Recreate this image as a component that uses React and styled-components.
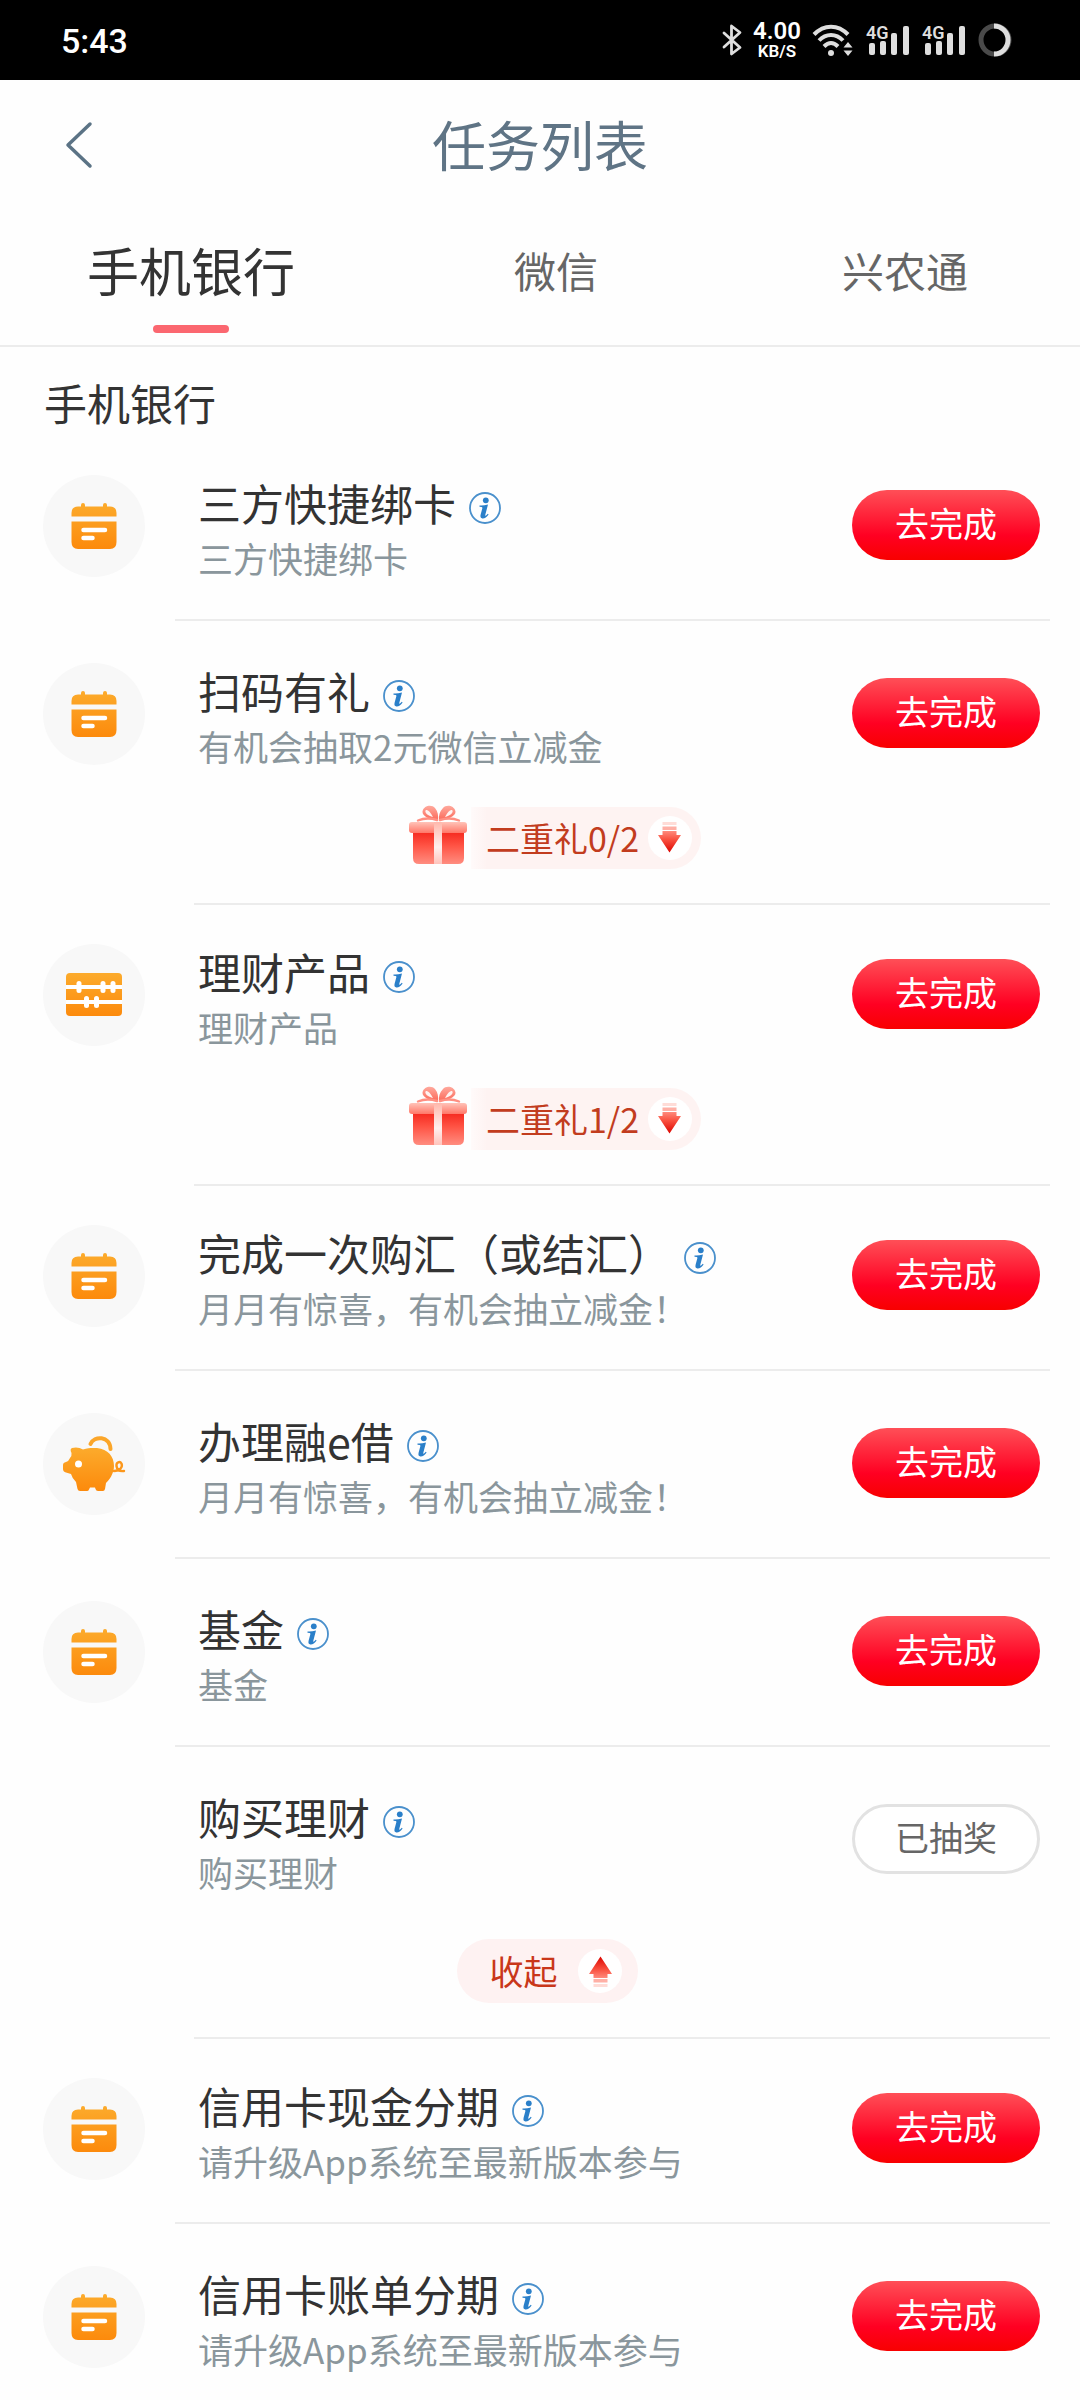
import React, { useState } from "react";
import styled, { createGlobalStyle } from "styled-components";

const tabs = ["手机银行", "微信", "兴农通"];

const tasks = [
  { title: "三方快捷绑卡", desc: "三方快捷绑卡", icon: "calendar" },
  { title: "扫码有礼", desc: "有机会抽取2元微信立减金", icon: "calendar", gift: "二重礼0/2" },
  { title: "理财产品", desc: "理财产品", icon: "abacus", gift: "二重礼1/2" },
  { title: "完成一次购汇（或结汇）", desc: "月月有惊喜，有机会抽立减金！", icon: "calendar" },
  { title: "办理融e借", desc: "月月有惊喜，有机会抽立减金！", icon: "pig" },
  { title: "基金", desc: "基金", icon: "calendar" },
  { title: "购买理财", desc: "购买理财", done: true, collapse: true },
  { title: "信用卡现金分期", desc: "请升级App系统至最新版本参与", icon: "calendar" },
  { title: "信用卡账单分期", desc: "请升级App系统至最新版本参与", icon: "calendar" },
];

function Bluetooth() {
  return (
    <svg width="20" height="32" viewBox="0 0 20 32" fill="none" stroke="#dedede" strokeWidth="2.8" strokeLinejoin="round" strokeLinecap="round">
      <path d="M2 9L18 23.500L9.500 30V2L18 8.500L2 23" />
    </svg>
  );
}

function Wifi() {
  return (
    <svg width="42" height="34" viewBox="0 0 42 34" fill="none" stroke="#dedede" strokeWidth="4">
      <path d="M2 11.500C12 1 26 1 36 11.500" />
      <path d="M7 17.500C14 10 24 10 31 17.500" />
      <path d="M12 23.500C16.500 19 21.500 19 26 23.500" />
      <circle cx="19" cy="30" r="3" fill="#dedede" stroke="none" />
      <path d="M31.500 24.500L36 19L40.500 24.500ZM31.500 27.500L36 33L40.500 27.500Z" fill="#dedede" stroke="none" />
    </svg>
  );
}

function Signal() {
  return (
    <svg width="44" height="32" viewBox="0 0 44 32" fill="#dedede">
      <text x="0" y="15" fontFamily="Roboto, sans-serif" fontSize="18" fontWeight="600">4G</text>
      <rect x="3" y="19" width="6" height="12" rx="2" />
      <rect x="14" y="17" width="6" height="14" rx="2" />
      <rect x="25" y="9" width="6" height="22" rx="2" />
      <rect x="37" y="2" width="6" height="29" rx="2" />
    </svg>
  );
}

function Battery() {
  return (
    <svg width="34" height="34" viewBox="0 0 34 34" fill="none" strokeWidth="5">
      <circle cx="17" cy="17" r="14" stroke="#4a4a4a" />
      <path d="M16 3A14 14 0 1 1 16 31" stroke="#dedede" />
    </svg>
  );
}

function Orange({ id }) {
  return (
    <linearGradient id={id} x1="0" y1="0" x2="0" y2="1">
      <stop offset="0" stopColor="#fcab2c" />
      <stop offset="1" stopColor="#fc8a0c" />
    </linearGradient>
  );
}

function Calendar() {
  return (
    <svg width="46" height="46" viewBox="0 0 46 46">
      <defs><Orange id="cal" /></defs>
      <path fill="url(#cal)" d="M0.500 13.500V10Q0.500 3.500 7 3.500H10V2Q10 0 12 0T14 2V3.500H32V2Q32 0 34 0T36 2V3.500H39Q45.500 3.500 45.500 10V13.500ZM0.500 18.500H45.500V39Q45.500 46 39 46H7Q0.500 46 0.500 39Z" />
      <path d="M12.500 27H34M12.500 35H21.500" stroke="#fff" strokeWidth="4.500" strokeLinecap="round" />
    </svg>
  );
}

function Abacus() {
  return (
    <svg width="56" height="44" viewBox="0 0 56 44">
      <defs><Orange id="aba" /></defs>
      <rect width="56" height="43" rx="4" fill="url(#aba)" />
      <path d="M0 14H56M0 29H56" stroke="#fff" strokeWidth="4" />
      <g fill="#fff">
        <rect x="10.500" y="8" width="5" height="12" rx="2.500" />
        <rect x="34.500" y="8" width="5" height="12" rx="2.500" />
        <rect x="44.500" y="8" width="5" height="12" rx="2.500" />
        <rect x="18" y="23" width="5" height="12" rx="2.500" />
        <rect x="28" y="23" width="5" height="12" rx="2.500" />
      </g>
    </svg>
  );
}

function Pig() {
  return (
    <svg width="62" height="56" viewBox="0 0 62 56">
      <defs><Orange id="pig" /></defs>
      <path fill="url(#pig)" d="M9 12Q15 10.500 20 13.500C26 11.500 30 12 34 12C45 13 51 20.500 51 30C51 38 46 44 43 47L42 53Q41.500 55 40 55H35Q33 55 32.500 53L32 51.500H27L26 53.500Q25.500 55 24 55H17Q15 55 14.500 53L13 46Q9 42 8 38L3 36.500Q0 35.500 0 33V29Q0 26.500 3 26Q5.500 25.500 7 22Q9 19.500 8.500 17Q6.500 13 9 12Z" />
      <path d="M27.500 8C31 -0.500 47 -0.500 47.500 13" fill="none" stroke="#fba62a" strokeWidth="4" strokeLinecap="round" />
      <path d="M51 35C57 35 60 31 58.500 27.500C57 25 53 26 53.500 30C54 34 57 35.500 61 35" fill="none" stroke="#fc971b" strokeWidth="2.400" strokeLinecap="round" />
      <circle cx="15.500" cy="28" r="3.500" fill="#fff" />
    </svg>
  );
}

const icons = { calendar: Calendar, abacus: Abacus, pig: Pig };

function Gift() {
  return (
    <svg width="58" height="60" viewBox="0 3 58 60">
      <defs>
        <linearGradient id="box" x1="0" y1="0" x2="0" y2="1">
          <stop offset="0" stopColor="#f5261c" />
          <stop offset="0.450" stopColor="#ff5445" />
          <stop offset="1" stopColor="#ff8d80" />
        </linearGradient>
        <linearGradient id="lid" x1="0" y1="0" x2="0" y2="1">
          <stop offset="0" stopColor="#ffc3b8" />
          <stop offset="1" stopColor="#ff7768" />
        </linearGradient>
        <linearGradient id="ribbon" x1="0" y1="0" x2="0" y2="1">
          <stop offset="0" stopColor="#ffb8ac" />
          <stop offset="0.600" stopColor="#fff0ee" />
          <stop offset="1" stopColor="#ffc4bc" />
        </linearGradient>
        <linearGradient id="bow" x1="0" y1="0" x2="0" y2="1">
          <stop offset="0" stopColor="#ffa99d" />
          <stop offset="1" stopColor="#fb6a5a" />
        </linearGradient>
      </defs>
      <path d="M4 26H55V53Q55 59 49 59H10Q4 59 4 53Z" fill="url(#box)" />
      <rect y="17" width="58" height="11" rx="3" fill="url(#lid)" />
      <rect x="25" y="17" width="8" height="42" fill="url(#ribbon)" />
      <path d="M29 15C21 15 13 11 13.500 6.500C15 0 23 -0.500 26 3C29 6.500 29.500 11 29 15ZM30 15C38 15 47 11 46.500 6.500C45 0 37 -0.500 34 3C30.500 6.500 29.500 11 30 15Z" fill="url(#bow)" />
      <path d="M24 12C19 10.500 15.500 8 16.500 5.500C18 4 21 6 24 12ZM36 12C41 10.500 44.500 8 43.500 5.500C42 4 39 6 36 12Z" fill="#fff3f1" />
      <path d="M9 15.500C16 12.500 22 13 28 15M50 15.500C43 12.500 37 13 31 15" fill="none" stroke="#ff8f82" strokeWidth="2.400" strokeLinecap="round" />
    </svg>
  );
}

function Arrow({ up }) {
  return (
    <ArrowDot>
      <svg width="44" height="44" viewBox="0 0 44 44">
        <defs>
          <linearGradient id="arrow" x1="0" y1="0" x2="0" y2="1">
            <stop offset="0" stopColor="#ff8a7c" />
            <stop offset="0.400" stopColor="#f9503f" />
            <stop offset="1" stopColor="#dc0500" />
          </linearGradient>
        </defs>
        <g transform={up ? "rotate(180 22 22)" : undefined}>
          <path d="M14.500 15H28.500V19H33L21.500 36.500L10 19H14.500Z" fill="url(#arrow)" />
          <rect x="14.500" y="10.500" width="14" height="3.500" fill="#ffb0a6" />
          <rect x="14.500" y="6" width="14" height="3" fill="#ffdcd7" />
        </g>
      </svg>
    </ArrowDot>
  );
}

function Info() {
  return (
    <svg width="32" height="32" viewBox="0 0 32 32">
      <circle cx="16" cy="16" r="15" fill="none" stroke="#4a90cc" strokeWidth="1.800" />
      <circle cx="16.800" cy="8.300" r="2.900" fill="#2a7fc9" />
      <path d="M10.500 13.400Q14 13.800 19 12.500L16.300 22.800Q16.100 24.300 17 23.600Q17.800 23 18.800 21.800L19.600 22.400Q16.600 26.800 13.400 26.500Q10.800 26.200 11.600 22.800L13.400 16Q13.700 14.700 10.500 14.700Z" fill="#2a7fc9" />
    </svg>
  );
}

function Task({ task }) {
  const Icon = icons[task.icon];
  const expanded = Boolean(task.gift || task.collapse);
  return (
    <Row $expanded={expanded}>
      <Main>
        <IconCircle $empty={!Icon}>{Icon && <Icon />}</IconCircle>
        <Texts>
          <Title>
            {task.title}
            <InfoButton type="button" aria-label="说明"><Info /></InfoButton>
          </Title>
          <Desc>{task.desc}</Desc>
        </Texts>
        <Action type="button" $done={task.done}>{task.done ? "已抽奖" : "去完成"}</Action>
      </Main>
      {task.gift && (
        <Extra>
          <GiftButton type="button">
            <Gift />
            <GiftPill>{task.gift}<Arrow /></GiftPill>
          </GiftButton>
        </Extra>
      )}
      {task.collapse && (
        <Extra $collapse>
          <CollapseButton type="button">收起<Arrow up /></CollapseButton>
        </Extra>
      )}
      <Divider $expanded={expanded} />
    </Row>
  );
}

export default function App() {
  const [active, setActive] = useState(0);

  return (
    <Page>
      <GlobalStyle />
      <StatusBar>
        <Time>5:43</Time>
        <StatusIcons>
          <Bluetooth />
          <Speed><b>4.00</b><span>KB/S</span></Speed>
          <Wifi />
          <Signal />
          <Signal />
          <Battery />
        </StatusIcons>
      </StatusBar>
      <Header>
        <Back type="button" aria-label="返回">
          <svg width="28" height="46" viewBox="0 0 28 46" fill="none" stroke="#5b7385" strokeWidth="3.500" strokeLinecap="round" strokeLinejoin="round">
            <path d="M25 2L3 23L25 44" />
          </svg>
        </Back>
        <h1>任务列表</h1>
      </Header>
      <Tabs>
        {tabs.map((tab, i) => (
          <Tab key={tab} type="button" $active={i === active} onClick={() => setActive(i)}>{tab}</Tab>
        ))}
      </Tabs>
      <SectionTitle>手机银行</SectionTitle>
      <List>
        {tasks.map((task) => <Task key={task.title} task={task} />)}
      </List>
    </Page>
  );
}

const GlobalStyle = createGlobalStyle`
  * {
    box-sizing: border-box;
  }
  body {
    margin: 0;
    background: #fefefe;
  }
  body, button {
    font-family: "Noto Sans CJK SC", sans-serif;
  }
  button {
    border: 0;
    padding: 0;
    background: none;
    color: inherit;
    cursor: pointer;
  }
  svg {
    display: block;
    flex-shrink: 0;
    overflow: visible;
  }
`;

const Page = styled.div`
  min-height: 100vh;
  background: #fefefe;
  color: #333;
`;

const StatusBar = styled.div`
  display: flex;
  align-items: center;
  justify-content: space-between;
  height: 80px;
  padding: 0 68px 0 61px;
  background: #000;
  color: #fff;
`;

const Time = styled.span`
  padding-top: 2px;
  font: 500 34px/40px Roboto, sans-serif;
`;

const StatusIcons = styled.div`
  display: flex;
  align-items: center;
  gap: 12px;
`;

const Speed = styled.div`
  display: flex;
  flex-direction: column;
  align-items: center;
  width: 46px;
  font-family: Roboto, sans-serif;
  b {
    font-size: 24px;
    font-weight: 600;
    line-height: 22px;
  }
  span {
    font-size: 17px;
    font-weight: 600;
    line-height: 18px;
  }
`;

const Header = styled.header`
  display: grid;
  grid-template-columns: 93px 1fr 93px;
  align-items: center;
  height: 130px;
  h1 {
    margin: 0;
    padding-bottom: 2px;
    font-size: 54px;
    font-weight: 400;
    line-height: 60px;
    text-align: center;
    color: #5f7485;
  }
`;

const Back = styled.button`
  justify-self: end;
`;

const Tabs = styled.nav`
  display: grid;
  grid-template-columns: 382fr 348fr 350fr;
  padding: 30px 0 12px;
  border-bottom: 2px solid #ececec;
`;

const Tab = styled.button`
  display: flex;
  flex-direction: column;
  align-items: center;
  gap: 25px;
  font-size: ${({ $active }) => ($active ? 52 : 42)}px;
  line-height: 60px;
  color: ${({ $active }) => ($active ? "#333" : "#666")};
  &::after {
    content: "";
    width: 76px;
    height: 8px;
    border-radius: 4px;
    background: ${({ $active }) => ($active ? "#fb6770" : "transparent")};
  }
`;

const SectionTitle = styled.h2`
  margin: 0;
  padding: 26px 44px 2px;
  font-size: 43px;
  font-weight: 400;
  line-height: 58px;
`;

const List = styled.ul`
  margin: 0;
  padding: 0;
  list-style: none;
`;

/* expanded rows sit a little tighter against the next one */
const Row = styled.li`
  margin-bottom: ${({ $expanded }) => ($expanded ? "-3px" : 0)};
`;

const Main = styled.div`
  display: flex;
  align-items: flex-start;
  padding: 42px 40px 32px 43px;
  ${Row}:last-child & {
    padding-bottom: 16px;
  }
`;

const IconCircle = styled.div`
  display: flex;
  align-items: center;
  justify-content: center;
  flex-shrink: 0;
  width: 102px;
  height: 102px;
  border-radius: 50%;
  background: ${({ $empty }) => ($empty ? "transparent" : "#f8f8f8")};
`;

const Texts = styled.div`
  flex: 1;
  min-width: 0;
  margin-left: 53px;
`;

const Title = styled.div`
  display: flex;
  align-items: center;
  height: 54px;
  font-size: 43px;
  line-height: 54px;
`;

const InfoButton = styled.button`
  margin: 12px 0 0 13px;
`;

const Desc = styled.div`
  font-size: 35px;
  line-height: 58px;
  color: #8a969c;
`;

const Action = styled.button`
  flex-shrink: 0;
  width: 188px;
  height: 70px;
  margin-top: 15px;
  padding-bottom: 4px;
  border: ${({ $done }) => ($done ? "3px solid #e2e2e2" : 0)};
  border-radius: 35px;
  background: ${({ $done }) => ($done ? "#fff" : "linear-gradient(#ff4f57, #ff0022 65%, #f80000)")};
  font-size: 34px;
  line-height: 50px;
  color: ${({ $done }) => ($done ? "#666" : "#fff")};
`;

const Extra = styled.div`
  display: flex;
  justify-content: center;
  padding: ${({ $collapse }) => ($collapse ? "6px 0 34px 14px" : "0 0 34px 30px")};
`;

const GiftButton = styled.button`
  display: flex;
  align-items: center;
  gap: 4px;
`;

const GiftPill = styled.span`
  display: flex;
  align-items: center;
  gap: 9px;
  height: 62px;
  padding: 0 9px 0 15px;
  border-radius: 0 31px 31px 0;
  background: linear-gradient(90deg, #fffafa, #fef3f2 16px);
  font-size: 34px;
  line-height: 50px;
  color: #c23c1e;
`;

const CollapseButton = styled.button`
  display: flex;
  align-items: center;
  gap: 20px;
  height: 64px;
  padding: 0 16px 0 33px;
  border-radius: 32px;
  background: #fef2f2;
  font-size: 34px;
  line-height: 50px;
  color: #c9371a;
`;

const ArrowDot = styled.span`
  border-radius: 50%;
  background: #fff;
`;

const Divider = styled.div`
  height: 2px;
  margin: 0 30px 0 ${({ $expanded }) => ($expanded ? 194 : 175)}px;
  background: #ececec;
  ${Row}:last-child & {
    display: none;
  }
`;
